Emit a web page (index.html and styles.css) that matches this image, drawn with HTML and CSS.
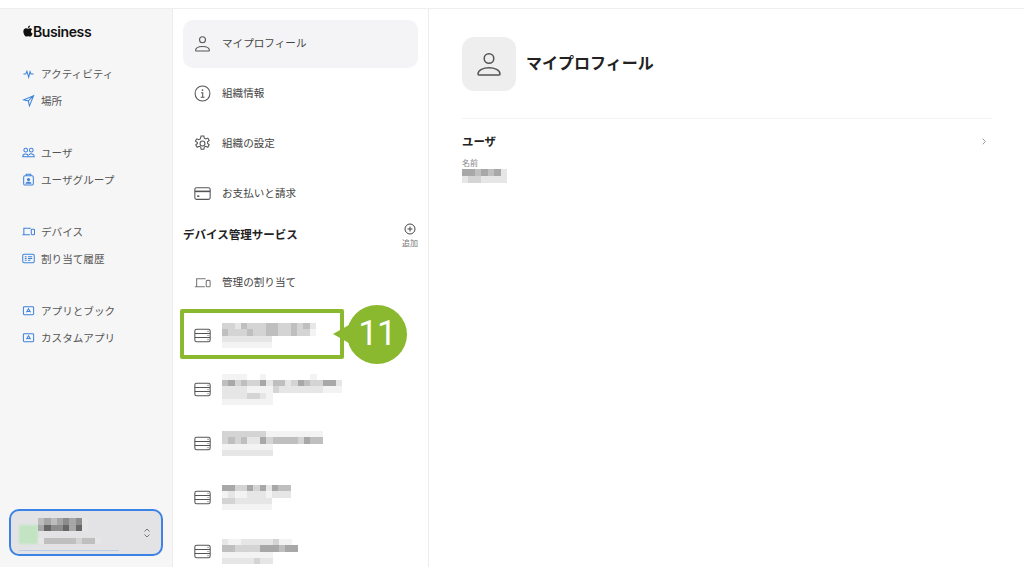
FILE: index.html
```html
<!DOCTYPE html>
<html lang="ja">
<head>
<meta charset="utf-8">
<title>Apple Business</title>
<link rel="stylesheet" href="styles.css">
</head>
<body>
<div class="topbar"></div>
<div class="app">
  <aside class="sidebar">
    <div class="brand">
      <svg class="apple" viewBox="1.500 .8 12.300 14"><path d="M11.300 8.400c0-1.800 1.500-2.600 1.500-2.700-.8-1.200-2.100-1.400-2.500-1.400-1.100-.1-2.100.6-2.600.6-.6 0-1.400-.6-2.300-.6C4.200 4.300 3.100 5 2.500 6c-1.200 2.100-.3 5.200.9 7 .6.800 1.300 1.800 2.200 1.700.9 0 1.200-.5 2.300-.5s1.400.5 2.300.5c1 0 1.600-.9 2.200-1.700.7-1 1-2 1-2-.1 0-2.100-.8-2.100-2.600zM9.500 3.100c.5-.6.800-1.400.7-2.200-.7 0-1.500.5-2 1-.4.500-.8 1.300-.7 2.100.8.100 1.500-.4 2-.9z"/></svg>
      <span>Business</span>
    </div>
    <nav class="nav-group">
      <a class="nav-item"><svg class="nav-icon" viewBox="0 0 14 14"><path d="M1.500 7.500h2.500l1.300-3 1.900 6.500 1.500-6 1 2.500H12.500"/></svg>アクティビティ</a>
      <a class="nav-item"><svg class="nav-icon" viewBox="0 0 14 14"><path d="M12.500 1.800 1.800 6.300l5 1.200 1.200 5.300z M12.500 1.800 6.800 7.500"/></svg>場所</a>
    </nav>
    <nav class="nav-group">
      <a class="nav-item"><svg class="nav-icon" viewBox="0 0 14 14"><circle cx="4" cy="4.500" r="2"/><circle cx="10" cy="4.500" r="2"/><path d="M.8 11.500c0-4 6-4 6 0z M7.400 11.500h5.800c0-3.400-4.300-3.700-5.600-2"/></svg>ユーザ</a>
      <a class="nav-item"><svg class="nav-icon" viewBox="0 0 14 14"><rect x="1.800" y="3" width="10.400" height="10" rx="1.500"/><path d="M4.500 3V1.300h5V3"/><circle class="fill" cx="7" cy="7" r="1.700"/><path class="fill" d="M3.800 11.500c0-2.800 6.400-2.800 6.400 0z"/></svg>ユーザグループ</a>
    </nav>
    <nav class="nav-group">
      <a class="nav-item"><svg class="nav-icon" viewBox="0 0 14 14"><path d="M2 10V3.500h7.500 M.5 10.500h8"/><rect x="10" y="4.500" width="3.500" height="6" rx="1"/></svg>デバイス</a>
      <a class="nav-item"><svg class="nav-icon" viewBox="0 0 14 14"><rect x=".8" y="2.500" width="12.400" height="9" rx="1.500"/><path d="M3 5h2M6.500 5H11M3 7h2M6.500 7H11M3 9h2M6.500 9H9"/></svg>割り当て履歴</a>
    </nav>
    <nav class="nav-group">
      <a class="nav-item"><svg class="nav-icon" viewBox="0 0 14 14"><rect x="1.500" y="3" width="11" height="8.500" rx="1"/><path d="M4.800 9 7 5.200 9.200 9M5.500 8h3"/></svg>アプリとブック</a>
      <a class="nav-item"><svg class="nav-icon" viewBox="0 0 14 14"><rect x="1.500" y="3" width="11" height="8.500" rx="1"/><path d="M4.800 9 7 5.200 9.200 9M5.500 8h3"/></svg>カスタムアプリ</a>
    </nav>
    <div class="account">
      <div class="account-main">
        <div class="avatar"></div>
        <div class="account-text">
          <svg class="mosaic m-account" viewBox="0 0 8 2" preserveAspectRatio="none">
            <path class="a1" d="M0 .5h1M2 .5h1"/><path class="a2" d="M1 .5h1M3 .5h1M5 .5h1M0 1.500h1M5 1.500h1"/><path class="a3" d="M4 .5h1M6 .5h1M2 1.500h2"/><path class="a4" d="M1 1.500h1M4 1.500h1M6 1.500h1"/><path class="g2" d="M7 .5h1M7 1.500h1"/>
          </svg>
          <svg class="mosaic m-account2" viewBox="0 0 10 1" preserveAspectRatio="none"><path class="g2" d="M0 .5h1M9 .5h1"/><path class="g4" d="M1 .5h5M7 .5h2"/><path class="g3" d="M6 .5h1"/></svg>
        </div>
        <svg class="updown" viewBox="0 0 8 12"><path d="M1.500 4.500 4 2l2.500 2.500M1.500 7.500 4 10l2.500-2.500"/></svg>
      </div>
      <div class="account-line"></div>
    </div>
  </aside>

  <section class="middle">
    <a class="row active"><svg class="row-icon" viewBox="0 0 16 16"><circle cx="8" cy="4.500" r="2.800"/><path d="M1.500 14.500c0-5 13-5 13 0 0 .3-.2.500-.5.500H2c-.3 0-.5-.2-.5-.5z"/></svg>マイプロフィール</a>
    <a class="row"><svg class="row-icon" viewBox="0 0 16 16"><circle cx="8" cy="8" r="7"/><circle class="fill" cx="8" cy="4.800" r=".8"/><path d="M6.600 7.300H8.200V11.500M6.300 11.500h3.600"/></svg>組織情報</a>
    <a class="row"><svg class="row-icon" viewBox="0 0 16 16"><circle cx="8" cy="8" r="2.300"/><path d="M6.700 1h2.600l.4 2 1.400.7 1.900-.8 1.300 2.200-1.500 1.300v1.600l1.500 1.300-1.300 2.200-1.900-.8-1.400.7-.4 2H6.700l-.4-2-1.400-.7-1.900.8-1.300-2.200 1.500-1.300V7.100L1.300 5.800l1.300-2.200 1.900.8 1.400-.7z"/></svg>組織の設定</a>
    <a class="row"><svg class="row-icon" viewBox="0 0 16 16"><rect x=".8" y="2.500" width="14.400" height="11" rx="1.500"/><path class="thick" d="M.8 6h14.400"/><path class="thick" d="M3 10.500h2"/></svg>お支払いと請求</a>
    <header class="section-head">
      <h2>デバイス管理サービス</h2>
      <div class="add">
        <svg class="add-icon" viewBox="0 0 12 12"><circle cx="6" cy="6" r="5"/><path d="M6 3.500v5M3.500 6h5"/></svg>
        <span>追加</span>
      </div>
    </header>
    <a class="row assign"><svg class="row-icon light" viewBox="0 0 16 16"><path d="M2.500 11.500V4.500h8.500M.8 12h9.500"/><rect x="11.500" y="6" width="3.700" height="6" rx="1"/></svg>管理の割り当て</a>

    <a class="server"><svg class="row-icon" viewBox="0 0 16 16"><rect x=".8" y="2.200" width="14.400" height="11.600" rx="1.600"/><path d="M.8 6.100h14.400M.8 9.900h14.400"/><path d="M12.800 4.100h.8M12.800 8h.8M12.800 11.900h.8"/></svg>
      <svg class="mosaic" style="width:94px;height:25px" viewBox="0 0 15 4" preserveAspectRatio="none">
        <path class="g2" d="M0 2.500h8M2 .5h1M14 .5h1"/><path class="g1" d="M0 3.500h8M14 1.500h1"/><path class="g3" d="M0 .5h2M4 .5h3M9 .5h2M12 .5h1M1 1.500h2M3 1.500h1M5 1.500h2M9 1.500h2M12 1.500h2"/><path class="g4" d="M3 .5h1M7 .5h2M11 .5h1M13 .5h1M0 1.500h1M4 1.500h1M7 1.500h2M11 1.500h1"/>
      </svg></a>
    <a class="server"><svg class="row-icon" viewBox="0 0 16 16"><rect x=".8" y="2.200" width="14.400" height="11.600" rx="1.600"/><path d="M.8 6.100h14.400M.8 9.900h14.400"/><path d="M12.800 4.100h.8M12.800 8h.8M12.800 11.900h.8"/></svg>
      <svg class="mosaic" style="width:120px;height:31px" viewBox="0 0 19 5" preserveAspectRatio="none">
        <path class="g1" d="M0 .5h4M6 .5h1M14 .5h1M4 2.500h4M16 2.500h3M7 3.500h1M0 4.500h8"/><path class="g2" d="M7 1.500h1M10 1.500h1M18 1.500h1M0 2.500h4M9 2.500h7M0 3.500h4M6 3.500h1"/><path class="g3" d="M2 1.500h1M4 1.500h2M11 1.500h1M14 1.500h2M8 2.500h1M4 3.500h2"/><path class="g4" d="M0 1.500h1M3 1.500h1M8 1.500h2M13 1.500h1"/><path class="g5" d="M1 1.500h1M6 1.500h1M12 1.500h1M16 1.500h2"/>
      </svg></a>
    <a class="server"><svg class="row-icon" viewBox="0 0 16 16"><rect x=".8" y="2.200" width="14.400" height="11.600" rx="1.600"/><path d="M.8 6.100h14.400M.8 9.900h14.400"/><path d="M12.800 4.100h.8M12.800 8h.8M12.800 11.900h.8"/></svg>
      <svg class="mosaic" style="width:101px;height:25px" viewBox="0 0 16 4" preserveAspectRatio="none">
        <path class="g1" d="M7 .5h9M0 2.500h8"/><path class="g2" d="M4 1.500h2M0 3.500h8"/><path class="g3" d="M0 .5h7M0 1.500h1M2 1.500h1M7 1.500h1M12 1.500h1"/><path class="g4" d="M1 1.500h1M3 1.500h1M8 1.500h4M14 1.500h2"/><path class="g5" d="M6 1.500h1M13 1.500h1"/>
      </svg></a>
    <a class="server"><svg class="row-icon" viewBox="0 0 16 16"><rect x=".8" y="2.200" width="14.400" height="11.600" rx="1.600"/><path d="M.8 6.100h14.400M.8 9.900h14.400"/><path d="M12.800 4.100h.8M12.800 8h.8M12.800 11.900h.8"/></svg>
      <svg class="mosaic" style="width:69px;height:25px" viewBox="0 0 11 4" preserveAspectRatio="none">
        <path class="g1" d="M0 1.500h1M2 1.500h2M7 1.500h1M0 3.500h8"/><path class="g2" d="M7 .5h1M1 1.500h1M4 1.500h3M8 1.500h3M2 2.500h6"/><path class="g3" d="M2 .5h2M5 .5h1M0 2.500h2"/><path class="g4" d="M9 .5h2"/><path class="g5" d="M0 .5h2M4 .5h1M6 .5h1M8 .5h1"/>
      </svg></a>
    <a class="server"><svg class="row-icon" viewBox="0 0 16 16"><rect x=".8" y="2.200" width="14.400" height="11.600" rx="1.600"/><path d="M.8 6.100h14.400M.8 9.900h14.400"/><path d="M12.800 4.100h.8M12.800 8h.8M12.800 11.900h.8"/></svg>
      <svg class="mosaic" style="width:76px;height:25px" viewBox="0 0 12 4" preserveAspectRatio="none">
        <path class="g1" d="M1 .5h2M9 .5h2M0 2.500h8"/><path class="g2" d="M0 .5h1M4 .5h4M0 3.500h5M6 3.500h2M3 .5h1"/><path class="g3" d="M8 .5h1M2 1.500h4M5 3.500h1"/><path class="g4" d="M0 1.500h2M9 1.500h1"/><path class="g5" d="M6 1.500h3M10 1.500h2"/>
      </svg></a>
  </section>

  <main class="detail">
    <header class="detail-head">
      <div class="detail-icon"><svg viewBox="0 0 26 26"><circle cx="13" cy="7.500" r="4.800"/><path d="M2 23c0-8.300 22-8.300 22 0 0 .5-.4.900-.9.900H2.900c-.5 0-.9-.4-.9-.9z"/></svg></div>
      <h1>マイプロフィール</h1>
    </header>
    <div class="user-card">
      <div class="user-title"><h3>ユーザ</h3><svg class="chev" viewBox="0 0 4 7"><path d="M.7 .7 3.300 3.500 .7 6.300"/></svg></div>
      <div class="field-label">名前</div>
      <svg class="mosaic m-name" viewBox="0 0 7 2" preserveAspectRatio="none"><path class="g5" d="M0 .5h2M3 .5h1M5 .5h1"/><path class="g4" d="M2 .5h1M4 .5h1"/><path class="g2" d="M6 .5h1M0 1.500h1M3 1.500h4"/><path class="g3" d="M1 1.500h2"/></svg>
    </div>
  </main>
</div>

<div class="callout">
  <div class="callout-box"></div>
  <div class="callout-tail"></div>
  <div class="callout-num">11</div>
</div>
</body>
</html>
```
FILE: styles.css
```css
* { box-sizing: border-box; }
html, body { margin: 0; height: 576px; overflow: hidden; background: #fff; }
body {
  font-family: "Noto Sans CJK JP", "Noto Sans", sans-serif;
  color: #333;
  position: relative;
}
.topbar { height: 9px; border-bottom: 1px solid #eeeeee; }
.app { display: flex; height: 558px; overflow: hidden; }

/* sidebar */
.sidebar {
  width: 173px;
  flex: none;
  background: #f6f6f6;
  border-right: 1px solid #ececec;
  padding: 0 9px 11px;
  display: flex;
  flex-direction: column;
}
.brand {
  display: flex;
  align-items: center;
  height: 20px;
  margin: 12px 0 19px 14px;
  font: 600 14px Inter, "Liberation Sans", sans-serif;
  letter-spacing: -.4px;
  color: #111;
}
.apple { width: 10px; height: 12px; fill: #111; margin-top: -1px; }
.nav-group { display: flex; flex-direction: column; margin-bottom: 25px; }
.nav-item {
  display: flex;
  align-items: center;
  height: 27px;
  padding-left: 13px;
  gap: 6px;
  font-size: 10.600px;
  color: #555;
}
.nav-icon { width: 13px; height: 13px; flex: none; fill: none; stroke: #3d82dc; stroke-width: 1.100; }
.nav-icon .fill { fill: #3d82dc; stroke: none; }
.account {
  margin-top: auto;
  height: 47px;
  border: 2px solid #3b82e6;
  border-radius: 10px;
  background: #e3e3e6;
  padding: 7px 8px 3px;
  display: flex;
  flex-direction: column;
  justify-content: space-between;
}
.account-main { display: flex; align-items: flex-start; }
.avatar { width: 19px; height: 19px; margin-top: 7px; background: #c2e4c3; flex: none; filter: blur(1px); }
.account-text { display: flex; flex-direction: column; gap: 7px; }
.mosaic { display: block; flex: none; filter: blur(.7px); fill: none; stroke-width: 1; shape-rendering: crispEdges; }
.m-account { width: 50px; height: 13px; }
.m-account2 { width: 63px; height: 6px; }
.a1 { stroke: #bdbdbd; }
.a2 { stroke: #a6a6a6; }
.a3 { stroke: #8c8c8c; }
.a4 { stroke: #666666; }
.g1 { stroke: #f3f3f3; }
.g2 { stroke: #e6e6e6; }
.g3 { stroke: #d4d4d4; }
.g4 { stroke: #bfbfbf; }
.g5 { stroke: #a8a8a8; }
.updown { width: 8px; height: 12px; margin-left: auto; margin-top: 9px; margin-right: 2px; fill: none; stroke: #777; stroke-width: 1; }
.account-line { width: 100px; height: 1.500px; background: #b8cde9; }

/* middle */
.middle {
  width: 256px;
  flex: none;
  border-right: 1px solid #ececec;
  padding: 11px 10px 0;
  display: flex;
  flex-direction: column;
}
.row {
  display: flex;
  align-items: center;
  flex: none;
  height: 48px;
  margin-bottom: 2px;
  padding: 0 0 4px 11px;
  gap: 11px;
  font-size: 10.600px;
  color: #444;
  border-radius: 10px;
}
.row.active { background: #f4f4f6; }
.row-icon { width: 17px; height: 17px; margin-top: 2px; flex: none; fill: none; stroke: #555; stroke-width: 1; }
.row-icon.light { stroke: #777; }
.row-icon .fill { fill: #555; stroke: none; }
.row-icon .thick { stroke-width: 1.500; }
.section-head {
  display: flex;
  justify-content: space-between;
  flex: none;
  height: 43px;
  margin-top: -2px;
}
.section-head h2 { margin: 8px 0 0; font-size: 11.500px; font-weight: 700; line-height: 17px; color: #222; }
.add { display: flex; flex-direction: column; align-items: center; margin-top: 5px; width: 16px; }
.add-icon { width: 12px; height: 12px; fill: none; stroke: #444; stroke-width: 1; }
.add span { font-size: 8px; line-height: 12px; margin-top: 2px; color: #777; white-space: nowrap; }
.row.assign { height: 44px; margin-bottom: 3px; }
.server {
  display: flex;
  align-items: center;
  flex: none;
  height: 54px;
  padding-left: 11px;
  gap: 11px;
}
.server .row-icon { margin-top: 0; }

/* detail */
.detail { flex: 1; padding: 28px 32px 0 33px; }
.detail-head { display: flex; align-items: center; gap: 10px; height: 54px; }
.detail-icon {
  width: 54px;
  height: 54px;
  border-radius: 12px;
  background: #eeeeee;
  display: flex;
  align-items: center;
  justify-content: center;
}
.detail-icon svg { width: 26px; height: 26px; fill: none; stroke: #555; stroke-width: 1.500; }
h1 { margin: 0 0 4px; font-size: 16px; font-weight: 700; color: #222; }
.user-card { margin-top: 27px; border-top: 1px solid #f2f2f2; padding-top: 13px; }
.user-title { display: flex; justify-content: space-between; align-items: center; height: 17px; }
h3 { margin: 0; font-size: 11.400px; font-weight: 700; color: #222; }
.chev { width: 4px; height: 7px; fill: none; stroke: #999; stroke-width: 1; margin: 2px 6px 0 0; }
.field-label { font-size: 8px; line-height: 10px; margin-top: 9px; color: #888; }
.m-name { width: 45px; height: 14px; margin-top: 1px; }

/* annotation overlay */
.callout-box {
  position: absolute;
  left: 180px;
  top: 309px;
  width: 164px;
  height: 50px;
  border: 4px solid #8ab82e;
  border-radius: 2px;
}
.callout-tail {
  position: absolute;
  left: 333px;
  top: 317px;
  width: 30px;
  height: 34px;
  background: #8ab82e;
  clip-path: polygon(0 50%, 100% 0, 100% 100%);
}
.callout-num {
  position: absolute;
  left: 347px;
  top: 305px;
  width: 60px;
  height: 59px;
  border-radius: 50%;
  background: #8ab82e;
  color: #fff;
  font: 400 35px/58px Roboto, "Noto Sans", sans-serif;
  letter-spacing: -1px;
  text-align: center;
}
```
